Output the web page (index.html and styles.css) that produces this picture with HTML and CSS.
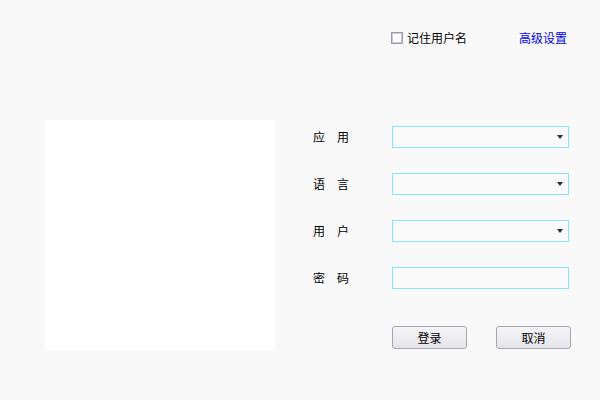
FILE: index.html
```html
<!DOCTYPE html>
<html>
<head>
<meta charset="utf-8">
<link rel="stylesheet" href="styles.css">
</head>
<body>
<div class="window">
  <div class="top">
    <label class="remember"><span class="check"></span><span>记住用户名</span></label>
    <a class="advanced">高级设置</a>
  </div>
  <div class="main">
    <div class="photo"></div>
    <div class="form">
      <div class="grid">
        <div class="label">应用</div>
        <div class="field"><span class="arrow"></span></div>
        <div class="label">语言</div>
        <div class="field"><span class="arrow"></span></div>
        <div class="label">用户</div>
        <div class="field"><span class="arrow"></span></div>
        <div class="label">密码</div>
        <div class="field"></div>
      </div>
      <div class="buttons">
        <button class="btn">登录</button>
        <button class="btn">取消</button>
      </div>
    </div>
  </div>
</div>
</body>
</html>
```
FILE: styles.css
```css
html, body {
  margin: 0;
  padding: 0;
}
body {
  background: #f9f9f9;
  font-family: "Noto Sans CJK SC", "Noto Sans", sans-serif;
  font-size: 12px;
  color: #000;
}
.window {
  width: 600px;
  height: 400px;
  overflow: hidden;
}
.top {
  height: 120px;
  box-sizing: border-box;
  padding: 30px 33px 0 0;
  display: flex;
  justify-content: flex-end;
  align-items: flex-start;
  gap: 52px;
}
.remember {
  display: flex;
  align-items: center;
  gap: 4px;
  height: 16px;
  line-height: 16px;
}
.check {
  width: 10px;
  height: 10px;
  border: 1px solid #9c9cac;
  box-shadow: inset 0 0 0 1px #cacad4;
  background: #fff;
}
.advanced {
  color: #0000ee;
  line-height: 16px;
  height: 16px;
}
.main {
  display: flex;
  padding-left: 45px;
}
.photo {
  width: 230px;
  height: 230px;
  background: #fff;
}
.form {
  margin-left: 38px;
  margin-top: 6px;
}
.grid {
  display: grid;
  grid-template-columns: 79px 177px;
  grid-auto-rows: 22px;
  row-gap: 25px;
}
.label {
  line-height: 22px;
  letter-spacing: 12px;
}
.field {
  box-sizing: border-box;
  border: 1px solid #84e4fc;
  background: #fafafa;
  display: flex;
  align-items: center;
  justify-content: flex-end;
  padding-right: 5px;
}
.arrow {
  width: 0;
  height: 0;
  border-left: 3.5px solid transparent;
  border-right: 3.5px solid transparent;
  border-top: 4px solid #2a2a3e;
}
.buttons {
  display: flex;
  margin-top: 37px;
  margin-left: 79px;
  gap: 29px;
}
.btn {
  width: 75px;
  height: 23px;
  box-sizing: border-box;
  border: 1px solid #a6a6ae;
  border-radius: 3px;
  background: linear-gradient(#f6f6f8, #e4e4ea);
  font-family: "Noto Sans CJK SC", "Noto Sans", sans-serif;
  font-size: 12px;
  color: #000;
  padding: 0;
  line-height: 21px;
}
```
